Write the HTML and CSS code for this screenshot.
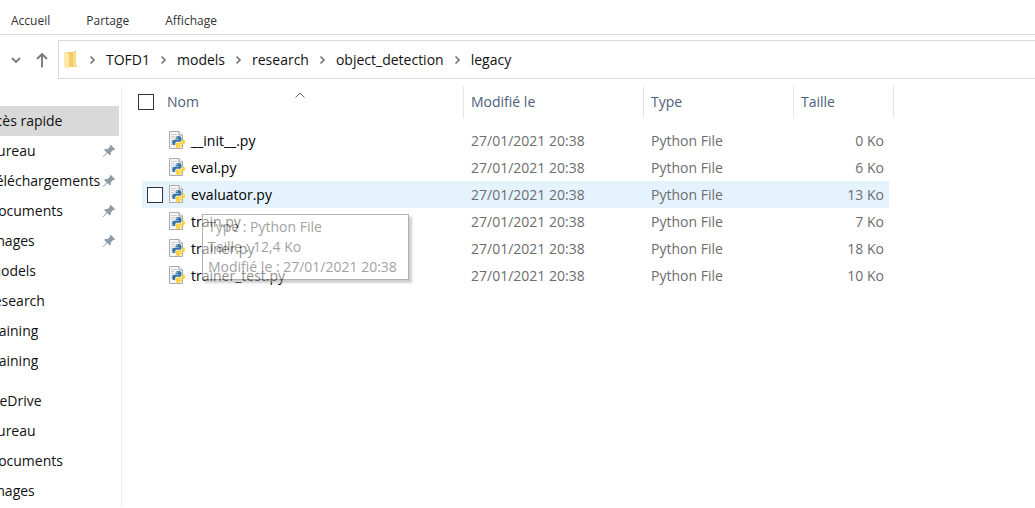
FILE: index.html
```html
<!DOCTYPE html>
<html lang="fr">
<head>
<meta charset="utf-8">
<meta name="viewport" content="width=device-width, initial-scale=1">
<title>legacy</title>
<link rel="stylesheet" href="styles.css">
</head>
<body>
<svg class="symbols" aria-hidden="true">
  <symbol id="chevron" viewBox="0 0 8 10"><path d="M2 1.5 5.5 5 2 8.5" fill="none" stroke="#777" stroke-width="1.7"/></symbol>
  <symbol id="pin" viewBox="0 0 14 14"><path fill="#8f9ba5" d="M8.6.8 13.2 5.3 12.1 6.1 11.2 5.9 8.9 8.2 8.8 10.8 7.9 11.5 5.3 9 1.4 12.9.7 13.1.9 12.4 4.6 8.4 2.1 6 3 5.1 5.7 5 8 2.8 7.8 1.7Z"/></symbol>
  <symbol id="python-file" viewBox="0 0 16 18">
    <path d="M.5.5H10L13.5 4V17.5H.5Z" fill="#f6f6f6" stroke="#aaa"/>
    <path d="M10 .5V4H13.5" fill="#fff" stroke="#999"/>
    <path d="M2 3.5H8M2 5.5H6M2 7.5H5M2 9.5H4M2 11.5H4M2 13.5H5" stroke="#d0d0d0"/>
    <path fill="#3873a6" d="M9.5 5C7.4 5 6.6 5.8 6.6 7V8.2H9.7V8.8H5.3C3.9 8.8 3.2 9.9 3.2 11.4S3.9 14 5.1 14H6.2V12.5C6.2 11.3 7 10.7 8.1 10.7H11C12 10.7 12.5 10 12.5 9.1V7C12.5 5.7 11.3 5 9.5 5Z"/>
    <circle cx="8" cy="6.6" r=".6" fill="#fff"/>
    <path fill="#fcd23f" d="M13.2 8.2V9.7C13.2 10.8 12.3 11.5 11.3 11.5H8.3C7.4 11.5 6.8 12.2 6.8 13V15.2C6.8 16.4 8.1 17 9.7 17S12.7 16.3 12.7 15.1V14H9.7V13.4H14C15.3 13.4 16 12.3 16 10.8S15.3 8.2 14.2 8.2Z"/>
    <circle cx="11.2" cy="15.5" r=".6" fill="#fff"/>
  </symbol>
</svg>

<nav class="menu" aria-label="Ruban">
  <button>Accueil</button>
  <button>Partage</button>
  <button>Affichage</button>
</nav>

<div class="location">
  <button class="recent" aria-label="Emplacements récents"><svg width="10" height="8" viewBox="0 0 10 8"><path d="M1 2 5 6 9 2" fill="none" stroke="#7a7a7a" stroke-width="1.8"/></svg></button>
  <button class="up" aria-label="Dossier parent"><svg width="14" height="16" viewBox="0 0 14 16"><path d="M7 15.5V2M2 7 7 2 12 7" fill="none" stroke="#767676" stroke-width="1.8"/></svg></button>
  <nav class="path" aria-label="Chemin">
    <svg class="folder" width="13" height="18" viewBox="0 0 13 18"><path fill="#f3cc68" d="M3 1H10V0H12V14L13 15V16H3Z"/><path fill="#f8dc88" d="M9 1H12V16H9Z"/><path fill="#ffe9a8" d="M0 1H1L5 3V18L0 16Z"/></svg>
    <svg class="chevron"><use href="#chevron"/></svg>
    <a href="#">TOFD1</a>
    <svg class="chevron"><use href="#chevron"/></svg>
    <a href="#">models</a>
    <svg class="chevron"><use href="#chevron"/></svg>
    <a href="#">research</a>
    <svg class="chevron"><use href="#chevron"/></svg>
    <a href="#">object_detection</a>
    <svg class="chevron"><use href="#chevron"/></svg>
    <a href="#">legacy</a>
  </nav>
</div>

<div class="content">
  <nav class="sidebar" aria-label="Volet de navigation">
    <ul class="group">
      <li><a class="item root selected" href="#"><span class="label">Accès rapide</span></a></li>
      <li><a class="item" href="#"><span class="label">Bureau</span><svg class="pin"><use href="#pin"/></svg></a></li>
      <li><a class="item" href="#"><span class="label">Téléchargements</span><svg class="pin"><use href="#pin"/></svg></a></li>
      <li><a class="item" href="#"><span class="label">Documents</span><svg class="pin"><use href="#pin"/></svg></a></li>
      <li><a class="item" href="#"><span class="label">Images</span><svg class="pin"><use href="#pin"/></svg></a></li>
      <li><a class="item" href="#"><span class="label">models</span></a></li>
      <li><a class="item" href="#"><span class="label">research</span></a></li>
      <li><a class="item" href="#"><span class="label">training</span></a></li>
      <li><a class="item" href="#"><span class="label">training</span></a></li>
    </ul>
    <ul class="group">
      <li><a class="item root" href="#"><span class="label">OneDrive</span></a></li>
      <li><a class="item" href="#"><span class="label">Bureau</span></a></li>
      <li><a class="item" href="#"><span class="label">Documents</span></a></li>
      <li><a class="item" href="#"><span class="label">Images</span></a></li>
    </ul>
  </nav>

  <main class="listing">
    <table class="files">
      <colgroup><col class="col-gutter"><col class="col-name"><col class="col-date"><col class="col-type"><col class="col-size"><col class="col-end"></colgroup>
      <thead>
        <tr>
          <th colspan="2"><div class="name-head"><input class="check" type="checkbox" aria-label="Tout sélectionner"><span>Nom</span><svg class="sort" width="10" height="6" viewBox="0 0 10 6"><path d="M.5 5.5 5 1 9.5 5.5" fill="none" stroke="#666"/></svg></div></th>
          <th>Modifié le</th>
          <th>Type</th>
          <th colspan="2">Taille</th>
        </tr>
      </thead>
      <tbody>
        <tr><td></td><td><div class="file"><svg class="icon"><use href="#python-file"/></svg><span>__init__.py</span></div></td><td>27/01/2021 20:38</td><td>Python File</td><td class="size">0 Ko</td><td></td></tr>
        <tr><td></td><td><div class="file"><svg class="icon"><use href="#python-file"/></svg><span>eval.py</span></div></td><td>27/01/2021 20:38</td><td>Python File</td><td class="size">6 Ko</td><td></td></tr>
        <tr class="hovered"><td></td><td><div class="file"><input class="check" type="checkbox" aria-label="Sélectionner evaluator.py"><svg class="icon"><use href="#python-file"/></svg><span>evaluator.py</span>
          <div class="tooltip" role="tooltip"><div>Type : Python File</div><div>Taille : 12,4 Ko</div><div>Modifié le : 27/01/2021 20:38</div></div></div></td><td>27/01/2021 20:38</td><td>Python File</td><td class="size">13 Ko</td><td></td></tr>
        <tr><td></td><td><div class="file"><svg class="icon"><use href="#python-file"/></svg><span>train.py</span></div></td><td>27/01/2021 20:38</td><td>Python File</td><td class="size">7 Ko</td><td></td></tr>
        <tr><td></td><td><div class="file"><svg class="icon"><use href="#python-file"/></svg><span>trainer.py</span></div></td><td>27/01/2021 20:38</td><td>Python File</td><td class="size">18 Ko</td><td></td></tr>
        <tr><td></td><td><div class="file"><svg class="icon"><use href="#python-file"/></svg><span>trainer_test.py</span></div></td><td>27/01/2021 20:38</td><td>Python File</td><td class="size">10 Ko</td><td></td></tr>
      </tbody>
    </table>
  </main>
</div>
</body>
</html>
```
FILE: styles.css
```css
* { box-sizing: border-box; }

body {
  margin: 0;
  background: #fff;
  color: #111;
  font: 14px/20px "Open Sans", "Noto Sans", sans-serif;
  overflow-x: hidden;
}

a { color: inherit; text-decoration: none; }
button { padding: 0; border: 0; background: none; font: inherit; color: inherit; }
ul { margin: 0; padding: 0; list-style: none; }
svg { display: block; flex: none; }
.symbols { position: absolute; width: 0; height: 0; }

.menu {
  display: flex;
  gap: 36px;
  padding: 11px 11px 3px;
  border-bottom: 1px solid #dadada;
  color: #333;
  font-size: 12px;
}

.location {
  display: flex;
  align-items: center;
  padding: 5px 0 0 11px;
}
.recent { margin-right: 14px; }
.up { margin-right: 9px; }
.path {
  flex: 1;
  display: flex;
  align-items: center;
  gap: 9px;
  padding: 9px 5px 8px;
  border: 1px solid #d9d9d9;
  border-right: 0;
}
.folder { margin-right: 2px; }
.chevron { width: 9px; height: 10px; }

.content { display: flex; padding-top: 7px; }

.sidebar {
  flex: none;
  width: 122px;
  padding: 20px 2px 1px 0;
  border-right: 1px solid #f0f0f0;
  overflow: hidden;
}
.group + .group { margin-top: 10px; }
.item {
  display: flex;
  align-items: center;
  justify-content: space-between;
  height: 30px;
  padding-right: 3px;
}
.selected { background: #d9d9d9; }
.label { margin-left: -12px; white-space: nowrap; overflow: hidden; }
.root .label { margin-left: -20px; }
.pin { width: 14px; height: 14px; }

.listing { flex: 1; min-width: 0; padding-left: 12px; }
.files { width: 760px; table-layout: fixed; border-collapse: separate; border-spacing: 0; }
.col-gutter { width: 8px; }
.col-name { width: 322px; }
.col-date { width: 180px; }
.col-type { width: 150px; }
.col-size { width: 95px; }
.col-end { width: 5px; }

th, td { padding: 0 0 0 7px; text-align: left; font-weight: 400; white-space: nowrap; }
th { height: 32px; border-right: 1px solid #e5e5e5; color: #4c607a; }
td { height: 27px; color: #6d6d6d; }
td:first-child, td:last-child { padding: 0; }
td:nth-child(2) { padding: 0; color: #000; }
td.size { padding: 0 5px 0 0; text-align: right; }
tbody::before { content: ""; display: block; height: 9px; }

.name-head { display: grid; grid-template-columns: 16px auto 1fr; gap: 13px; align-items: center; margin-left: -3px; }
.sort { align-self: start; justify-self: start; margin-left: 83px; }
.check {
  appearance: none;
  width: 16px;
  height: 16px;
  margin: 0;
  border: 1px solid #333;
  background: #fff;
}
.file { position: relative; display: flex; align-items: center; gap: 6px; padding-left: 27px; }
.file .check { margin-left: -22px; }
.icon { width: 16px; height: 18px; margin-bottom: 2px; }
.hovered td:nth-child(n+2):nth-child(-n+5) { background: #e5f3ff; }

.tooltip {
  position: absolute;
  z-index: 1;
  top: 29px;
  left: 60px;
  padding: 2px 11px 2px 5px;
  border: 1px solid #707070;
  background: #fff;
  box-shadow: 3px 3px 2px #aaa;
  color: #555;
  opacity: .55;
}
```
